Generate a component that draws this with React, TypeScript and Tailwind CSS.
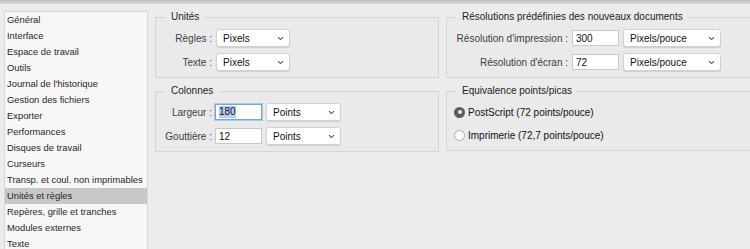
import React from "react";

const items = [
  "Général",
  "Interface",
  "Espace de travail",
  "Outils",
  "Journal de l'historique",
  "Gestion des fichiers",
  "Exporter",
  "Performances",
  "Disques de travail",
  "Curseurs",
  "Transp. et coul. non imprimables",
  "Unités et règles",
  "Repères, grille et tranches",
  "Modules externes",
  "Texte",
];

function Chevron() {
  return (
    <svg width="7" height="5" viewBox="0 0 7 5" className="shrink-0">
      <path d="M1 1.2 L3.5 3.6 L6 1.2" fill="none" stroke="#555" strokeWidth="1.1" />
    </svg>
  );
}

function Select({ value, w }: { value: string; w: string }) {
  return (
    <div
      className={`${w} h-[18px] shrink-0 flex items-center justify-between pl-[6px] pr-[5px] bg-white border border-[#d2d2d2] rounded-[3px] shadow-[0_1px_1px_rgba(0,0,0,0.12)] text-[#111]`}
    >
      <span>{value}</span>
      <Chevron />
    </div>
  );
}

function Input({ value, focused }: { value: string; focused?: boolean }) {
  return (
    <div
      className={`w-[47px] h-[16px] shrink-0 flex items-center pl-[3px] bg-white border text-[#111] ${
        focused
          ? "border-[#76a3e4] shadow-[0_0_0_1px_#a9c6ef]"
          : "border-[#c9c9c9]"
      }`}
    >
      {focused ? <span className="bg-[#b3cef3] leading-[12px]">{value}</span> : value}
    </div>
  );
}

function Box({
  title,
  children,
  w,
}: {
  title: string;
  children: React.ReactNode;
  w: string;
}) {
  return (
    <fieldset className={`${w} border border-[#d4d4d4] bg-[#eaeaea] m-0 p-0 min-w-0`}>
      <legend className="ml-[9px] px-[6px] leading-[12px] text-[#1c1c1c]">{title}</legend>
      {children}
    </fieldset>
  );
}

function Label({ text, w }: { text: string; w: string }) {
  return <div className={`${w} shrink-0 text-right text-[#3d3d3d]`}>{text}</div>;
}

export default function App() {
  return (
    <div className="w-[750px] h-[249px] overflow-hidden bg-[#ececec] text-[10px] font-['Liberation_Sans',Arial,sans-serif] flex flex-col">
      <div className="h-[4px] shrink-0 bg-gradient-to-b from-[#c0c0c0] to-[#d8d8d8]" />
      <div className="flex flex-1 min-h-0">
        <div className="ml-[4px] mt-[7px] w-[144px] h-[260px] shrink-0 border border-[#d6d6d6] bg-[#f7f7f7]">
          {items.map((it) => (
            <div
              key={it}
              className={`h-[16px] leading-[16px] pl-[2px] whitespace-nowrap text-[9.4px] text-[#262626] ${
                it === "Unités et règles" ? "bg-[#c8c8c8]" : ""
              }`}
            >
              {it}
            </div>
          ))}
        </div>

        <div className="ml-[7px] mt-[7px] flex gap-[7px]">
          <div className="flex flex-col gap-[7px]">
            <Box title="Unités" w="w-[284px]">
              <div className="pt-[6px] pb-[6px] flex flex-col gap-[6px]">
                <div className="flex items-center h-[18px]">
                  <Label text="Règles :" w="w-[56px]" />
                  <div className="ml-[4px]">
                    <Select value="Pixels" w="w-[74px]" />
                  </div>
                </div>
                <div className="flex items-center h-[18px]">
                  <Label text="Texte :" w="w-[56px]" />
                  <div className="ml-[4px]">
                    <Select value="Pixels" w="w-[74px]" />
                  </div>
                </div>
              </div>
            </Box>
            <Box title="Colonnes" w="w-[284px]">
              <div className="pt-[6px] pb-[6px] flex flex-col gap-[6px]">
                <div className="flex items-center h-[18px]">
                  <Label text="Largeur :" w="w-[56px]" />
                  <div className="ml-[3px]">
                    <Input value="180" focused />
                  </div>
                  <div className="ml-[4px]">
                    <Select value="Points" w="w-[75px]" />
                  </div>
                </div>
                <div className="flex items-center h-[18px]">
                  <Label text="Gouttière :" w="w-[56px]" />
                  <div className="ml-[3px]">
                    <Input value="12" />
                  </div>
                  <div className="ml-[4px]">
                    <Select value="Points" w="w-[75px]" />
                  </div>
                </div>
              </div>
            </Box>
          </div>

          <div className="flex flex-col gap-[7px]">
            <Box title="Résolutions prédéfinies des nouveaux documents" w="w-[320px]">
              <div className="pt-[6px] pb-[6px] flex flex-col gap-[6px]">
                <div className="flex items-center h-[18px]">
                  <Label text="Résolution d'impression :" w="w-[121px]" />
                  <div className="ml-[4px]">
                    <Input value="300" />
                  </div>
                  <div className="ml-[4px]">
                    <Select value="Pixels/pouce" w="w-[98px]" />
                  </div>
                </div>
                <div className="flex items-center h-[18px]">
                  <Label text="Résolution d'écran :" w="w-[121px]" />
                  <div className="ml-[4px]">
                    <Input value="72" />
                  </div>
                  <div className="ml-[4px]">
                    <Select value="Pixels/pouce" w="w-[98px]" />
                  </div>
                </div>
              </div>
            </Box>
            <Box title="Equivalence points/picas" w="w-[320px]">
              <div className="pt-[6px] pb-[6px] pl-[7px] flex flex-col gap-[5px]">
                <div className="flex items-center h-[18px] gap-[3px] text-[#111]">
                  <div className="w-[11px] h-[11px] rounded-full bg-[#5c5c5c] flex items-center justify-center">
                    <div className="w-[4px] h-[4px] rounded-full bg-[#e8e8e8]" />
                  </div>
                  <span>PostScript (72 points/pouce)</span>
                </div>
                <div className="flex items-center h-[18px] gap-[3px] text-[#111]">
                  <div className="w-[11px] h-[11px] rounded-full bg-white border border-[#a9a9a9]" />
                  <span>Imprimerie (72,7 points/pouce)</span>
                </div>
              </div>
            </Box>
          </div>
        </div>
      </div>
    </div>
  );
}
